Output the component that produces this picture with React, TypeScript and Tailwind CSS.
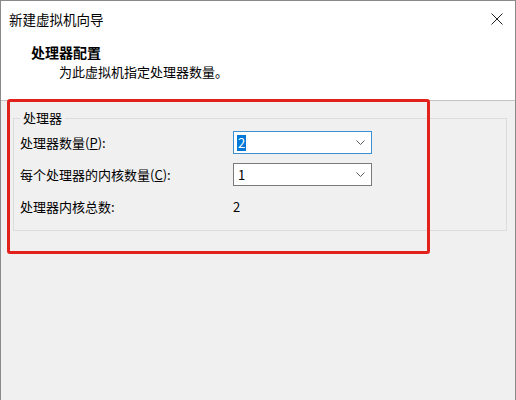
import React from 'react';

const Chevron = () => (
  <svg width="9" height="6" viewBox="0 0 9 6" className="shrink-0">
    <polyline points="0.5,0.5 4.5,4.5 8.5,0.5" fill="none" stroke="#5a5a5a" strokeWidth="1" />
  </svg>
);

interface ComboProps {
  value: string;
  focused?: boolean;
}

const Combo: React.FC<ComboProps> = ({ value, focused }) => (
  <div
    className={`flex h-[23px] w-[139px] items-center justify-between border bg-white pl-[3px] pr-[6px] ${
      focused ? 'border-[#3d8fd0]' : 'border-[#7a7a7a]'
    }`}
  >
    {focused ? (
      <span className="bg-[#0078d7] px-[1px] leading-[16px] text-white">{value}</span>
    ) : (
      <span className="px-[1px] leading-[16px]">{value}</span>
    )}
    <Chevron />
  </div>
);

export default function App() {
  return (
    <div className="relative h-[400px] w-[516px] overflow-hidden border-l border-r border-t border-[#8a8a8a] bg-[#f0f0f0] font-['Noto_Sans_CJK_SC',sans-serif] text-[13px] text-black">
      {/* Header */}
      <div className="h-[100px] border-b border-[#c4c4c4] bg-white">
        <div className="flex items-center justify-between pl-[8px] pr-[12px] pt-[10px]">
          <span className="text-[13.5px] leading-[16px]">新建虚拟机向导</span>
          <svg width="12" height="12" viewBox="0 0 12 12">
            <path d="M0.5 0.5 L11.5 11.5 M11.5 0.5 L0.5 11.5" stroke="#222" strokeWidth="1" />
          </svg>
        </div>
        <div className="ml-[30px] mt-[17px] text-[14px] font-bold leading-[16px]">处理器配置</div>
        <div className="ml-[58px] mt-[4px] leading-[16px]">为此虚拟机指定处理器数量。</div>
      </div>

      {/* Body */}
      <fieldset className="ml-[12px] mt-[10px] w-[494px] border border-[#dcdcdc] px-[6px] pb-[12px] pt-[6px]">
        <legend className="px-[3px] leading-[14px]">处理器</legend>
        <div className="grid grid-cols-[213px_139px] gap-y-[9px]">
          <div className="flex h-[23px] items-center">
            处理器数量(<span className="underline">P</span>):
          </div>
          <Combo value="2" focused />
          <div className="flex h-[23px] items-center">
            每个处理器的内核数量(<span className="underline">C</span>):
          </div>
          <Combo value="1" />
          <div className="flex h-[23px] items-center">处理器内核总数:</div>
          <div className="flex h-[23px] items-center">2</div>
        </div>
      </fieldset>

      {/* Red annotation box */}
      <div className="absolute left-[6px] top-[98px] h-[155px] w-[423px] rounded-[3px] border-[3px] border-[#e3211c]" />
    </div>
  );
}
